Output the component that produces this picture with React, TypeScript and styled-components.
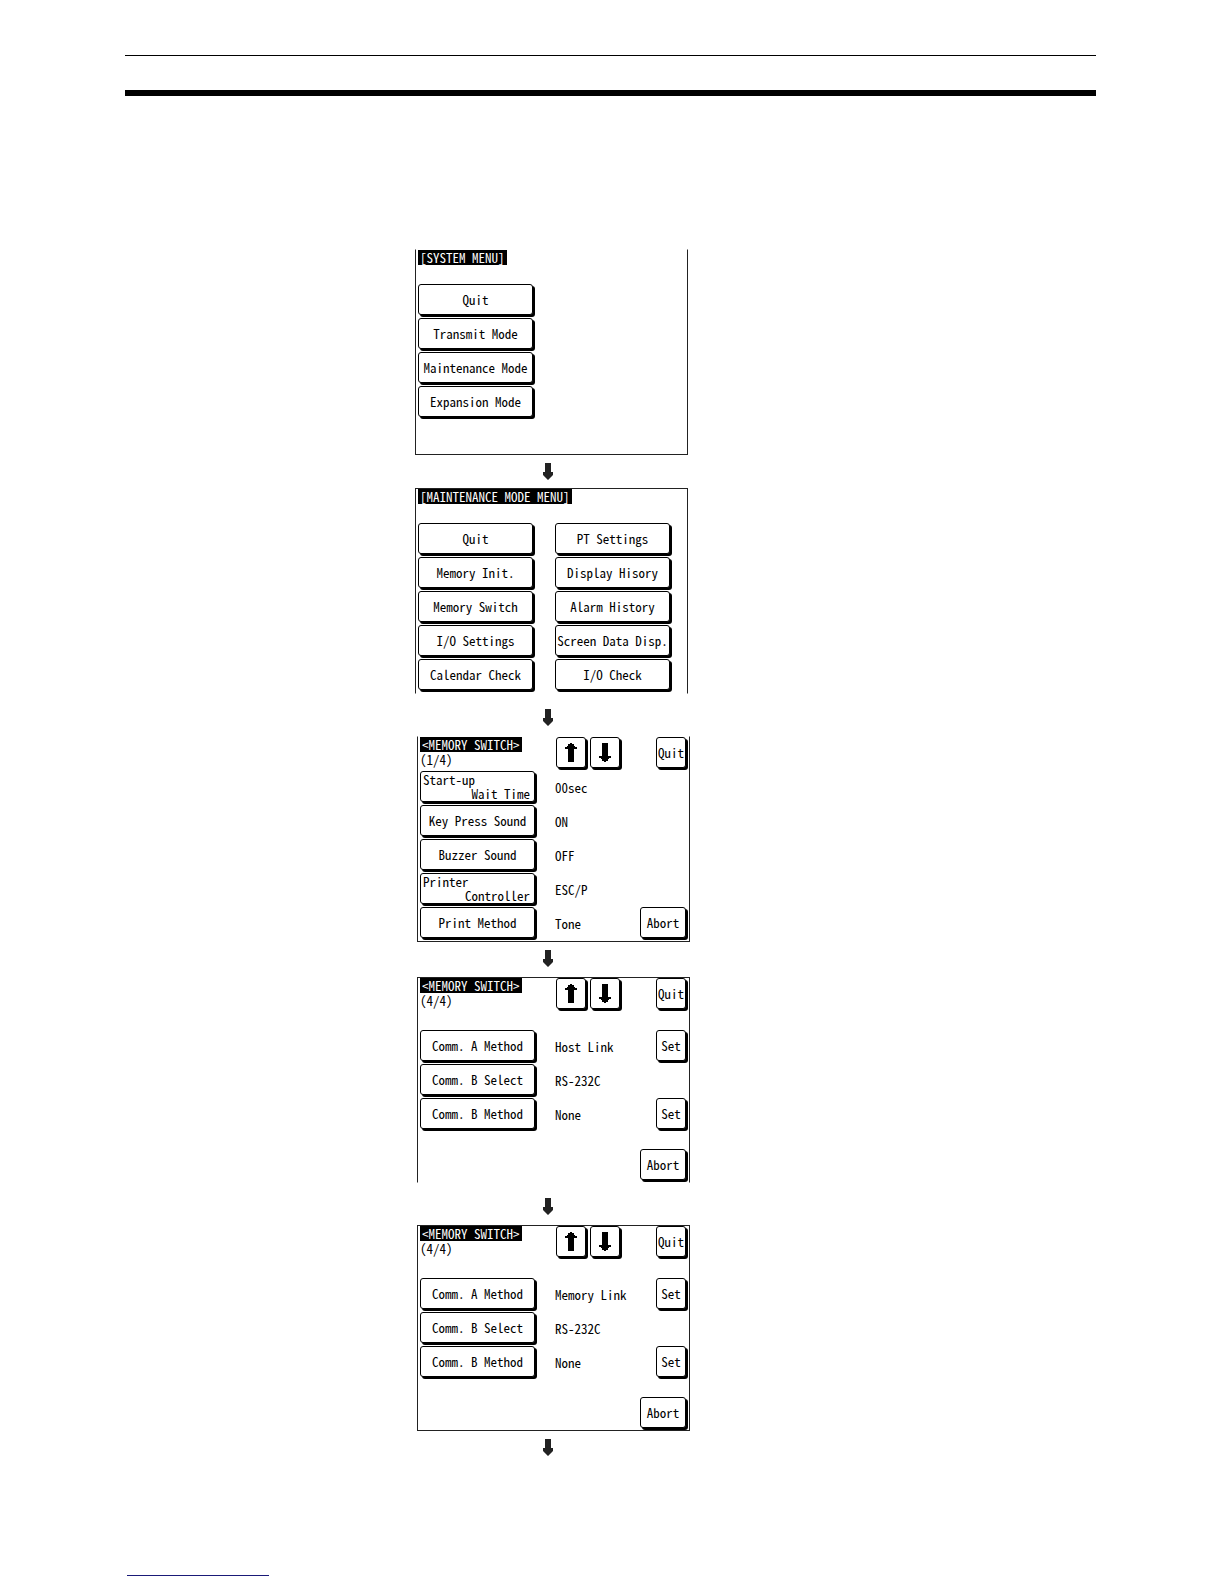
import React from "react";
import styled, { createGlobalStyle } from "styled-components";

const GlobalStyle = createGlobalStyle`
  *, *::before, *::after { box-sizing: border-box; }
  body {
    margin: 0;
    background: #fff;
    color: #000;
    font-family: "Noto Sans Mono CJK JP", "Liberation Mono", monospace;
    font-size: 13px;
    font-weight: 300;
    line-height: 15px;
  }
`;

const Page = styled.div`
  display: flex;
  flex-direction: column;
  min-height: 100vh;
  padding: 55px 128px 8px 125px;
`;

const PageHeader = styled.header`
  height: 41px;
  border-top: 1px solid #000;
  border-bottom: 6px solid #000;
`;

const PageFooter = styled.footer`
  width: 142px;
  margin: auto 0 0 2px;
  border-top: 1px solid #1a1a78;
`;

const Flow = styled.main`
  display: flex;
  flex-direction: column;
  width: 275px;
  margin: 153px 0 0 290px;
`;

const Screen = styled.section<{ $top?: boolean; $bottom?: boolean; $end?: boolean }>`
  display: flex;
  flex-direction: column;
  align-self: ${(p) => (p.$end ? "flex-end" : "flex-start")};
  width: 273px;
  min-height: 206px;
  padding: 0 1px 0 2px;
  border: 1px solid #222;
  border-top-color: ${(p) => (p.$top ? "#222" : "transparent")};
  border-bottom-color: ${(p) => (p.$bottom ? "#222" : "transparent")};
`;

const ScreenHeader = styled.header`
  display: flex;
  align-items: flex-start;
  justify-content: space-between;
  height: 34px;
`;

const Title = styled.h2`
  width: max-content;
  margin: 0;
  padding: 0 2px;
  background: #000;
  color: #fff;
  font-size: 13px;
  font-weight: 300;
  line-height: 15px;
`;

const PageCount = styled.p`
  margin: 0;
`;

const HeadingBlock = styled.div`
  width: 136px;
`;

const Pager = styled.div`
  display: flex;
  gap: 2px;
  margin-right: auto;
`;

const widths = { menu: 115, setting: 115, small: 30, abort: 46 };

const Key = styled.button<{ $size: keyof typeof widths }>`
  display: flex;
  align-items: center;
  justify-content: center;
  flex: none;
  width: ${(p) => widths[p.$size]}px;
  height: 31px;
  margin: 0 2px 2px 0;
  padding: 0;
  border: 1px solid #000;
  border-radius: 3px;
  background: #fff;
  box-shadow: 2px 2px 0 #000;
  color: #000;
  font: inherit;
  white-space: nowrap;
`;

const TwoLines = styled.span`
  display: flex;
  flex-direction: column;
  flex: 1;
  padding: 0 4px 0 2px;
  line-height: 14px;
  text-align: left;

  span:last-child {
    text-align: right;
  }
`;

const MenuGrid = styled.div`
  display: grid;
  grid-template-columns: 117px 117px;
  grid-auto-flow: column;
  grid-template-rows: repeat(5, 33px);
  gap: 1px 20px;
`;

const Settings = styled.div<{ $spaced?: boolean }>`
  display: flex;
  flex-direction: column;
  gap: 1px;
  padding-top: ${(p) => (p.$spaced ? 18 : 0)}px;
`;

const SettingRow = styled.div`
  display: flex;
  align-items: center;
`;

const Value = styled.output`
  flex: 1;
  padding-left: 18px;
`;

const ScreenFooter = styled.footer`
  display: flex;
  justify-content: flex-end;
  margin-top: auto;
`;

const Connector = styled.div<{ $above: number; $below: number }>`
  display: flex;
  justify-content: center;
  padding: ${(p) => p.$above}px 10px ${(p) => p.$below}px 0;
`;

const NextArrow = ({ above = 8, below = 10 }: { above?: number; below?: number }) => (
  <Connector $above={above} $below={below}>
    <svg width="10" height="17" viewBox="0 0 10 17" aria-hidden="true">
      <path d="M2 0h6v9h2v3l-5 5-5-5V9h2z" fill="#222" />
    </svg>
  </Connector>
);

const KeyArrow = ({ down }: { down?: boolean }) => (
  <svg width="12" height="19" viewBox="0 0 12 19" aria-hidden="true">
    {down ? (
      <path d="M3 0h6v13h3v2h-2v1H9v2H7v1H5v-1H3v-2H2v-1H0v-2h3z" fill="#000" />
    ) : (
      <path d="M3 19h6V6h3V4h-2V3H9V1H7V0H5v1H3v2H2v1H0v2h3z" fill="#000" />
    )}
  </svg>
);

type MenuProps = { title: string; items: string[]; top?: boolean; bottom?: boolean };

const MenuScreen = ({ title, items, top, bottom }: MenuProps) => (
  <Screen $top={top} $bottom={bottom}>
    <ScreenHeader>
      <Title>{title}</Title>
    </ScreenHeader>
    <MenuGrid>
      {items.map((item) => (
        <Key key={item} $size="menu">{item}</Key>
      ))}
    </MenuGrid>
  </Screen>
);

type Setting = { label: string | [string, string]; value: string; action?: "Set" | "Abort" };
type SettingProps = {
  page: string;
  settings: Setting[];
  spaced?: boolean;
  top?: boolean;
  bottom?: boolean;
};

const SettingScreen = ({ page, settings, spaced, top, bottom }: SettingProps) => (
  <Screen $end $top={top} $bottom={bottom}>
    <ScreenHeader>
      <HeadingBlock>
        <Title>&lt;MEMORY SWITCH&gt;</Title>
        <PageCount>{page}</PageCount>
      </HeadingBlock>
      <Pager>
        <Key $size="small" aria-label="Previous page"><KeyArrow /></Key>
        <Key $size="small" aria-label="Next page"><KeyArrow down /></Key>
      </Pager>
      <Key $size="small">Quit</Key>
    </ScreenHeader>
    <Settings $spaced={spaced}>
      {settings.map(({ label, value, action }) => (
        <SettingRow key={String(label)}>
          <Key $size="setting">
            {typeof label === "string" ? label : (
              <TwoLines>
                <span>{label[0]}</span>
                <span>{label[1]}</span>
              </TwoLines>
            )}
          </Key>
          <Value>{value}</Value>
          {action && <Key $size={action === "Set" ? "small" : "abort"}>{action}</Key>}
        </SettingRow>
      ))}
    </Settings>
    {spaced && (
      <ScreenFooter>
        <Key $size="abort">Abort</Key>
      </ScreenFooter>
    )}
  </Screen>
);

const commSettings = (method: string): Setting[] => [
  { label: "Comm. A Method", value: method, action: "Set" },
  { label: "Comm. B Select", value: "RS-232C" },
  { label: "Comm. B Method", value: "None", action: "Set" },
];

export default function App() {
  return (
    <Page>
      <GlobalStyle />
      <PageHeader />
      <Flow>
        <MenuScreen
          bottom
          title="[SYSTEM MENU]"
          items={["Quit", "Transmit Mode", "Maintenance Mode", "Expansion Mode"]}
        />
        <NextArrow below={8} />
        <MenuScreen
          top
          title="[MAINTENANCE MODE MENU]"
          items={[
            "Quit", "Memory Init.", "Memory Switch", "I/O Settings", "Calendar Check",
            "PT Settings", "Display Hisory", "Alarm History", "Screen Data Disp.", "I/O Check",
          ]}
        />
        <NextArrow above={15} />
        <SettingScreen
          bottom
          page="(1/4)"
          settings={[
            { label: ["Start-up", "Wait Time"], value: "00sec" },
            { label: "Key Press Sound", value: "ON" },
            { label: "Buzzer Sound", value: "OFF" },
            { label: ["Printer", "Controller"], value: "ESC/P" },
            { label: "Print Method", value: "Tone", action: "Abort" },
          ]}
        />
        <NextArrow />
        <SettingScreen top spaced page="(4/4)" settings={commSettings("Host Link")} />
        <NextArrow above={15} />
        <SettingScreen top bottom spaced page="(4/4)" settings={commSettings("Memory Link")} />
        <NextArrow />
      </Flow>
      <PageFooter />
    </Page>
  );
}
